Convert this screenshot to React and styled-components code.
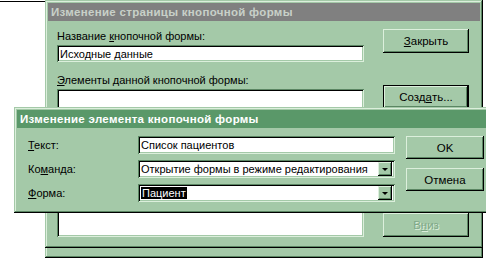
import styled, { createGlobalStyle, css } from 'styled-components'

const face = '#a4c9a8'
const light = '#dcefdc'
const dark = '#5b8663'
const activeCaption = '#5a9869'
const inactiveCaption = '#808080'

const GlobalStyle = createGlobalStyle`
  html, body {
    margin: 0;
    padding: 0;
    background: #ffffff;
  }
  body {
    font-family: "Liberation Sans", Arial, sans-serif;
    font-size: 11px;
    color: #000;
  }
`

const Desktop = styled.div`
  position: relative;
  width: 486px;
  height: 260px;
  overflow: hidden;
  background: #fff;
`

// windows on the desktop are placed at their coordinates
const Window = styled.div`
  position: absolute;
  left: ${p => p.$x}px;
  top: ${p => p.$y}px;
  width: ${p => p.$w}px;
  height: ${p => p.$h}px;
  box-sizing: border-box;
  background: ${face};
  padding: 3px;
  display: flex;
  flex-direction: column;
  box-shadow:
    inset -1px -1px #000,
    inset 1px 1px ${face},
    inset -2px -2px ${dark},
    inset 2px 2px ${light};
`

const BehindWindow = styled.div`
  position: absolute;
  left: -20px;
  top: 1px;
  width: 65px;
  height: 120px;
  border-top: 1px solid #000;
  border-right: 1px solid #000;
  background: #fff;
`

const TitleBar = styled.div`
  height: 18px;
  flex-shrink: 0;
  display: flex;
  align-items: center;
  padding-left: 3px;
  background: ${p => (p.$active ? activeCaption : inactiveCaption)};
  color: ${p => (p.$active ? '#ffffff' : '#c8d0c8')};
  font-weight: bold;
  font-size: 11.5px;
  letter-spacing: 0.3px;
  white-space: nowrap;
  overflow: hidden;
`

const PageBody = styled.div`
  flex: 1;
  display: flex;
  gap: 19px;
  padding: 8px 11px 8px 9px;
`

const Column = styled.div`
  width: 307px;
  display: flex;
  flex-direction: column;
`

const Label = styled.div`
  height: 14px;
  line-height: 14px;
  margin-top: ${p => p.$top || 0}px;
  margin-bottom: 2px;
  white-space: nowrap;
`

const sunken = css`
  background: #fff;
  box-sizing: border-box;
  box-shadow:
    inset 1px 1px ${dark},
    inset -1px -1px ${light},
    inset 2px 2px #000,
    inset -2px -2px ${face};
`

const TextBox = styled.div`
  ${sunken};
  height: 17px;
  padding: 0 3px;
  display: flex;
  align-items: center;
  white-space: nowrap;
  overflow: hidden;
`

const ListBox = styled.div`
  ${sunken};
  flex: 1;
`

const ButtonColumn = styled.div`
  width: ${p => p.$w}px;
  display: flex;
  flex-direction: column;
`

const Button = styled.div`
  height: ${p => p.$h || 24}px;
  margin-top: ${p => (p.$auto ? 'auto' : `${p.$top || 0}px`)};
  box-sizing: border-box;
  display: flex;
  align-items: center;
  justify-content: center;
  background: ${face};
  font-size: 11.5px;
  white-space: nowrap;
  color: ${p => (p.$disabled ? '#80a888' : '#000')};
  text-shadow: ${p => (p.$disabled ? `1px 1px ${light}` : 'none')};
  box-shadow: ${p =>
    p.$default
      ? `inset -1px -1px #000, inset 1px 1px #000, inset -2px -2px #000, inset 2px 2px ${light}, inset -3px -3px ${dark}`
      : `inset -1px -1px #000, inset 1px 1px ${light}, inset -2px -2px ${dark}`};
`

const DialogBody = styled.div`
  flex: 1;
  display: flex;
  gap: 11px;
  padding: 8px 0 0 11px;
`

const FormGrid = styled.div`
  display: grid;
  grid-template-columns: 110px 257px;
  grid-auto-rows: 18px;
  row-gap: 6px;
  align-items: center;
`

const FieldLabel = styled.div`
  white-space: nowrap;
`

const Combo = styled.div`
  ${sunken};
  height: 18px;
  display: flex;
  align-items: center;
  padding: 2px;
`

const ComboText = styled.div`
  flex: 1;
  padding-left: 1px;
  white-space: nowrap;
  overflow: hidden;
`

const Selected = styled.span`
  background: #000;
  color: #fff;
  padding: 0 1px;
`

const DropButton = styled.div`
  width: 14px;
  height: 14px;
  margin-right: 1px;
  box-sizing: border-box;
  background: ${face};
  display: flex;
  align-items: center;
  justify-content: center;
  box-shadow: inset -1px -1px #000, inset 1px 1px ${light}, inset -2px -2px ${dark};
`

const Arrow = styled.div`
  width: 0;
  height: 0;
  border-left: 3px solid transparent;
  border-right: 3px solid transparent;
  border-top: 3px solid #000;
  margin-top: 1px;
`

const FieldText = styled(TextBox)`
  height: 18px;
`

function Combobox({ children }) {
  return (
    <Combo>
      <ComboText>{children}</ComboText>
      <DropButton>
        <Arrow />
      </DropButton>
    </Combo>
  )
}

export default function App() {
  return (
    <Desktop>
      <GlobalStyle />
      <BehindWindow />
      <Window $x={45} $y={0} $w={438} $h={258} />
      <Window $x={45} $y={0} $w={438} $h={248}>
        <TitleBar>Изменение страницы кнопочной формы</TitleBar>
        <PageBody>
          <Column>
            <Label>Название <u>к</u>нопочной формы:</Label>
            <TextBox>Исходные данные</TextBox>
            <Label $top={11}><u>Э</u>лементы данной кнопочной формы:</Label>
            <ListBox />
          </Column>
          <ButtonColumn $w={86}>
            <Button><u>З</u>акрыть</Button>
            <Button $default $top={32}>Созд<u>а</u>ть...</Button>
            <Button $auto $disabled>В<u>н</u>из</Button>
          </ButtonColumn>
        </PageBody>
      </Window>
      <Window $x={14} $y={107} $w={484} $h={106}>
        <TitleBar $active>Изменение элемента кнопочной формы</TitleBar>
        <DialogBody>
          <FormGrid>
            <FieldLabel><u>Т</u>екст:</FieldLabel>
            <FieldText>Список пациентов</FieldText>
            <FieldLabel>Ко<u>м</u>анда:</FieldLabel>
            <Combobox>Открытие формы в режиме редактирования</Combobox>
            <FieldLabel><u>Ф</u>орма:</FieldLabel>
            <Combobox><Selected>Пациент</Selected></Combobox>
          </FormGrid>
          <ButtonColumn $w={78}>
            <Button $h={23}>OK</Button>
            <Button $h={23} $top={9}>Отмена</Button>
          </ButtonColumn>
        </DialogBody>
      </Window>
    </Desktop>
  )
}
